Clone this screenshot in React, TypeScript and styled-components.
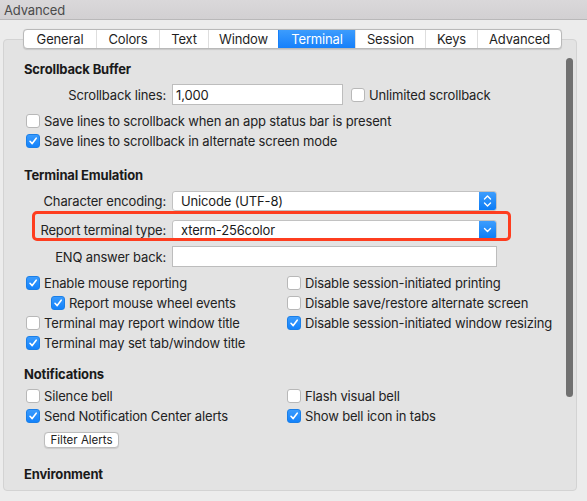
import React from 'react';
import styled, { createGlobalStyle, css } from 'styled-components';

const GlobalStyle = createGlobalStyle`
  html, body {
    margin: 0;
    padding: 0;
    background: #ececec;
  }
  body {
    font-family: Inter, "Noto Sans", "Liberation Sans", sans-serif;
    font-size: 13px;
    letter-spacing: -0.15px;
    color: #222;
    -webkit-font-smoothing: antialiased;
  }
`;

const Window = styled.div`
  width: 587px;
  height: 501px;
  background: #ececec;
  overflow: hidden;
  display: flex;
  flex-direction: column;
`;

const TitleBar = styled.div`
  height: 19px;
  flex: none;
  background: linear-gradient(#dad8da, #d2d0d2);
  border-bottom: 1px solid #b9b8b9;
  display: flex;
  align-items: center;
  padding-left: 4px;
  color: #4b4b4b;
  font-size: 13px;
`;

const Body = styled.div`
  padding: 9px 0 0 3px;
  display: flex;
  flex-direction: column;
`;

const TabBar = styled.div`
  display: flex;
  align-self: flex-start;
  margin-left: 20px;
  margin-bottom: -10px;
  height: 18px;
  background: #fff;
  border: 1px solid #b9b9b9;
  border-radius: 4px;
  position: relative;
  z-index: 1;
  overflow: hidden;
  box-shadow: 0 0.5px 1px rgba(0, 0, 0, 0.12);
`;

const Tab = styled.div<{ $w: number; $active?: boolean }>`
  width: ${(p) => p.$w}px;
  display: flex;
  align-items: center;
  justify-content: center;
  font-size: 13px;
  color: #1f1f1f;
  border-left: 1px solid #dedede;
  &:first-child {
    border-left: none;
  }
  ${(p) =>
    p.$active &&
    css`
      background: linear-gradient(#3c9cfd, #1680fa);
      color: #fff;
      border-left-color: #1680fa;
    `}
`;

const Panel = styled.div`
  width: 574px;
  height: 452px;
  box-sizing: border-box;
  background: #e3e3e3;
  border: 1px solid #d3d3d3;
  border-radius: 4px;
  position: relative;
  overflow: hidden;
  padding: 19px 0 0 20px;
  display: flex;
  flex-direction: column;
`;

const ScrollThumb = styled.div`
  position: absolute;
  right: 3px;
  top: 18px;
  width: 7px;
  height: 339px;
  border-radius: 4px;
  background: #707070;
`;

const Header = styled.div<{ $mt?: number }>`
  height: 20px;
  line-height: 20px;
  font-weight: 700;
  font-size: 13px;
  color: #1a1a1a;
  margin-top: ${(p) => p.$mt ?? 0}px;
`;

const FieldRow = styled.div<{ $mt?: number }>`
  display: flex;
  align-items: center;
  gap: 6px;
  height: 21px;
  margin-top: ${(p) => p.$mt ?? 0}px;
  position: relative;
`;

const FieldLabel = styled.div`
  width: 142px;
  text-align: right;
  white-space: nowrap;
`;

const TextInput = styled.div<{ $w: number }>`
  width: ${(p) => p.$w}px;
  box-sizing: border-box;
  height: 21px;
  background: #fff;
  border: 1px solid #bdbdbd;
  display: flex;
  align-items: center;
  padding-left: 3px;
  color: #1a1a1a;
`;

const Select = styled.div`
  width: 325px;
  height: 20px;
  display: flex;
  background: #fff;
  border: 1px solid #c2c2c2;
  border-radius: 3px;
  box-sizing: border-box;
  overflow: hidden;
`;

const SelectValue = styled.div`
  flex: 1;
  display: flex;
  align-items: center;
  padding-left: 8px;
  color: #1a1a1a;
`;

const SelectArrow = styled.div`
  width: 17px;
  background: linear-gradient(#3d9dfd, #0b7cf6);
  display: flex;
  align-items: center;
  justify-content: center;
`;

const Highlight = styled.div`
  position: absolute;
  left: 8px;
  top: -8px;
  width: 479px;
  height: 30px;
  border: 3px solid #fe3d1f;
  border-radius: 5px;
  box-sizing: border-box;
  pointer-events: none;
`;

const CheckRow = styled.div<{ $mt?: number; $indent?: number }>`
  display: flex;
  align-items: center;
  gap: 4px;
  height: 20px;
  white-space: nowrap;
  margin-top: ${(p) => p.$mt ?? 0}px;
  padding-left: ${(p) => 2 + (p.$indent ?? 0)}px;
`;

const Box = styled.span<{ $on?: boolean }>`
  width: 14px;
  height: 14px;
  box-sizing: border-box;
  border-radius: 3px;
  flex: none;
  display: flex;
  align-items: center;
  justify-content: center;
  ${(p) =>
    p.$on
      ? css`
          background: linear-gradient(#3a9bfd, #1382fb);
          border: 1px solid #1a7fe8;
        `
      : css`
          background: #fff;
          border: 1px solid #b8b8b8;
        `}
`;

const Grid = styled.div<{ $mt?: number }>`
  display: grid;
  grid-template-columns: 261px auto;
  margin-top: ${(p) => p.$mt ?? 0}px;
`;

const Button = styled.div`
  margin: 6px 0 0 20px;
  width: 75px;
  height: 16px;
  box-sizing: border-box;
  background: #fff;
  border: 1px solid #bdbdbd;
  border-radius: 4px;
  font-size: 11.5px;
  letter-spacing: 0;
  display: flex;
  align-items: center;
  justify-content: center;
  box-shadow: 0 0.5px 1px rgba(0, 0, 0, 0.1);
`;

const Check = ({ on, label, mt, indent }: { on?: boolean; label: string; mt?: number; indent?: number }) => (
  <CheckRow $mt={mt} $indent={indent}>
    <Box $on={on}>
      {on && (
        <svg width="10" height="10" viewBox="0 0 10 10">
          <path d="M2 5.3 L4.2 7.6 L8.2 2.2" fill="none" stroke="#fff" strokeWidth="1.6" strokeLinecap="round" strokeLinejoin="round" />
        </svg>
      )}
    </Box>
    {label}
  </CheckRow>
);

const UpDown = () => (
  <svg width="9" height="14" viewBox="0 0 9 14">
    <path d="M1.5 5 L4.5 2 L7.5 5 M1.5 9 L4.5 12 L7.5 9" fill="none" stroke="#fff" strokeWidth="1.4" strokeLinecap="round" strokeLinejoin="round" />
  </svg>
);

const Down = () => (
  <svg width="9" height="8" viewBox="0 0 9 8">
    <path d="M1.5 2.5 L4.5 5.5 L7.5 2.5" fill="none" stroke="#fff" strokeWidth="1.4" strokeLinecap="round" strokeLinejoin="round" />
  </svg>
);

const tabs: [string, number][] = [
  ['General', 72],
  ['Colors', 62],
  ['Text', 48],
  ['Window', 69],
  ['Terminal', 76],
  ['Session', 69],
  ['Keys', 51],
  ['Advanced', 83],
];

export default function App() {
  return (
    <>
      <GlobalStyle />
      <Window>
        <TitleBar>Advanced</TitleBar>
        <Body>
          <TabBar>
            {tabs.map(([name, w]) => (
              <Tab key={name} $w={w} $active={name === 'Terminal'}>
                {name}
              </Tab>
            ))}
          </TabBar>
          <Panel>
            <ScrollThumb />
            <Header>Scrollback Buffer</Header>
            <FieldRow $mt={5}>
              <FieldLabel>Scrollback lines:</FieldLabel>
              <TextInput $w={171}>1,000</TextInput>
              <CheckRow>
                <Box />
                Unlimited scrollback
              </CheckRow>
            </FieldRow>
            <Check mt={6} label="Save lines to scrollback when an app status bar is present" />
            <Check on label="Save lines to scrollback in alternate screen mode" />

            <Header $mt={14}>Terminal Emulation</Header>
            <FieldRow $mt={5}>
              <FieldLabel>Character encoding:</FieldLabel>
              <Select>
                <SelectValue>Unicode (UTF-8)</SelectValue>
                <SelectArrow>
                  <UpDown />
                </SelectArrow>
              </Select>
            </FieldRow>
            <FieldRow $mt={8}>
              <Highlight />
              <FieldLabel>Report terminal type:</FieldLabel>
              <Select>
                <SelectValue>xterm-256color</SelectValue>
                <SelectArrow>
                  <Down />
                </SelectArrow>
              </Select>
            </FieldRow>
            <FieldRow $mt={6}>
              <FieldLabel>ENQ answer back:</FieldLabel>
              <TextInput $w={325} />
            </FieldRow>

            <Grid $mt={6}>
              <Check on label="Enable mouse reporting" />
              <Check label="Disable session-initiated printing" />
              <Check on indent={25} label="Report mouse wheel events" />
              <Check label="Disable save/restore alternate screen" />
              <Check label="Terminal may report window title" />
              <Check on label="Disable session-initiated window resizing" />
              <Check on label="Terminal may set tab/window title" />
            </Grid>

            <Header $mt={11}>Notifications</Header>
            <Grid $mt={2}>
              <Check label="Silence bell" />
              <Check label="Flash visual bell" />
              <Check on label="Send Notification Center alerts" />
              <Check on label="Show bell icon in tabs" />
            </Grid>
            <Button>Filter Alerts</Button>

            <Header $mt={16}>Environment</Header>
          </Panel>
        </Body>
      </Window>
    </>
  );
}
